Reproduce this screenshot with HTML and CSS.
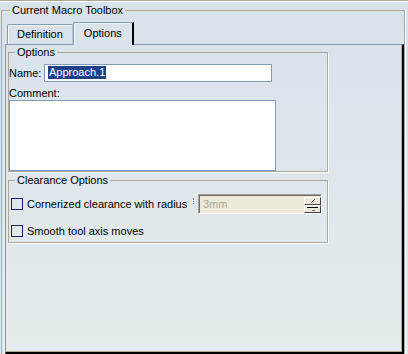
FILE: index.html
```html
<!DOCTYPE html>
<html>
<head>
<meta charset="utf-8">
<link rel="stylesheet" href="styles.css">
</head>
<body>
<div class="topline"></div>
<fieldset class="frame">
  <legend class="frame-legend">Current Macro Toolbox</legend>
  <div class="tabs">
    <div class="tab">Definition</div>
    <div class="tab tab-active">Options</div>
  </div>
  <div class="pane">
    <fieldset class="group group-options">
      <legend class="group-legend">Options</legend>
      <div class="name-row">
        <span class="name-label">Name:</span>
        <div class="textfield"><span class="selected">Approach.1</span></div>
      </div>
      <div class="comment-label">Comment:</div>
      <div class="textarea"></div>
    </fieldset>
    <fieldset class="group group-clearance">
      <legend class="group-legend">Clearance Options</legend>
      <div class="check-row">
        <span class="checkbox"></span>
        <span class="check-label check-label-fixed">Cornerized clearance with radius</span>
        <span class="dots"></span>
        <div class="spinner">
          <span class="spinner-text">3mm</span>
          <div class="spin-buttons">
            <span class="spin-btn">
              <svg width="15" height="6" viewBox="0 0 15 6"><path d="M6.5 4.5 L9.5 1.5" stroke="#000" stroke-width="1" fill="none"/></svg>
            </span>
            <span class="spin-btn">
              <svg width="15" height="6" viewBox="0 0 15 6"><path d="M2 1.5 H13" stroke="#000" stroke-width="1" fill="none"/><path d="M7 4.5 H10" stroke="#808080" stroke-width="1" fill="none"/></svg>
            </span>
          </div>
        </div>
      </div>
      <div class="check-row check-row-second">
        <span class="checkbox"></span>
        <span class="check-label">Smooth tool axis moves</span>
      </div>
    </fieldset>
  </div>
</fieldset>
</body>
</html>
```
FILE: styles.css
```css
* { box-sizing: border-box; }

html, body {
  margin: 0;
  padding: 0;
}

body {
  width: 408px;
  height: 354px;
  overflow: hidden;
  background: linear-gradient(#d8e2e9, #e5ecee);
  font-family: "Liberation Sans", Arial, sans-serif;
  font-size: 11px;
  color: #000;
}

.topline {
  height: 2px;
  border-top: 1px solid #aca899;
  border-bottom: 1px solid #ffffff;
  margin-bottom: 2px;
}

.frame {
  margin: 0 3px 0 1px;
  padding: 5px 0 0 3px;
  height: 350px;
  border: 1px solid #aca899;
  border-bottom: none;
  box-shadow: 1px 0 0 #fff;
  min-width: 0;
}

.frame-legend {
  margin-left: 5px;
  padding: 0 2px;
  line-height: 13px;
}

.tabs {
  display: flex;
  align-items: flex-end;
  height: 22px;
  margin-left: 2px;
  position: relative;
  z-index: 1;
}

.tab {
  height: 20px;
  line-height: 19px;
  padding: 0 9px;
  border: 1px solid #7f9db9;
  border-bottom: none;
  border-right-color: #b4c6d6;
  border-top-left-radius: 2px;
  box-shadow: inset 1px 1px 0 #f4f7f9;
}

.tab-active {
  height: 23px;
  margin-bottom: -1px;
  padding: 0 10px;
  line-height: 21px;
  border-right: 2px solid #000;
  background: #dae3e9;
}

.pane {
  height: 310px;
  padding: 1px 0 0 2px;
  border-top: 1px solid #7f9db9;
  border-left: 1px solid #7f9db9;
  border-right: 2px solid #000;
  border-bottom: 2px solid #000;
  box-shadow: inset -1px -1px 0 #aca899;
}

.group {
  margin: 0;
  width: 320px;
  border: 1px solid #aca899;
  box-shadow: 1px 1px 0 #fff;
  min-width: 0;
}

.group-legend {
  margin-left: 6px;
  padding: 0 2px;
  line-height: 13px;
}

.group-options {
  padding: 5px 0 0 0;
}

.name-row {
  display: flex;
  align-items: center;
  height: 18px;
}

.name-label {
  flex: none;
  width: 35px;
}

.textfield {
  width: 228px;
  height: 18px;
  border: 1px solid #7f9db9;
  background: #fff;
  padding: 1px 0 0 3px;
}

.selected {
  display: inline-block;
  line-height: 13px;
  padding: 0 1px;
  background: #1f3f86;
  color: #fff;
}

.comment-label {
  margin-top: 5px;
  line-height: 13px;
}

.textarea {
  width: 267px;
  height: 71px;
  border: 1px solid #7f9db9;
  background: #fff;
}

.group-clearance {
  margin-top: 2px;
  padding: 7px 0 1px 0;
}

.check-row {
  display: flex;
  align-items: center;
  height: 20px;
}

.check-row-second {
  margin-top: 7px;
}

.checkbox {
  flex: none;
  width: 12px;
  height: 12px;
  margin-left: 2px;
  border: 1px solid #1f1f6f;
}

.check-label {
  margin-left: 4px;
  white-space: nowrap;
}

.check-label-fixed {
  flex: none;
  width: 163px;
}

.dots {
  flex: none;
  width: 1px;
  height: 6px;
  margin-left: 3px;
  margin-bottom: 6px;
  border-left: 1px dotted #8c8c8c;
}

.spinner {
  flex: none;
  display: flex;
  align-items: center;
  justify-content: space-between;
  width: 124px;
  height: 20px;
  margin-left: 4px;
  background: #ece9d8;
  border-top: 1px solid #a0a0a0;
  border-left: 1px solid #a0a0a0;
  border-right: 1px solid #fff;
  border-bottom: 1px solid #fff;
  box-shadow: inset 1px 1px 0 #716f64;
}

.spinner-text {
  padding-left: 4px;
  color: #aca899;
}

.spin-buttons {
  display: flex;
  flex-direction: column;
  width: 17px;
  height: 16px;
  margin-top: 1px;
}

.spin-btn {
  flex: none;
  display: flex;
  width: 17px;
  height: 8px;
  background: #ece9d8;
  border-top: 1px solid #fff;
  border-left: 1px solid #fff;
  border-right: 1px solid #404040;
  border-bottom: 1px solid #404040;
}

.spin-btn svg {
  display: block;
}
```
